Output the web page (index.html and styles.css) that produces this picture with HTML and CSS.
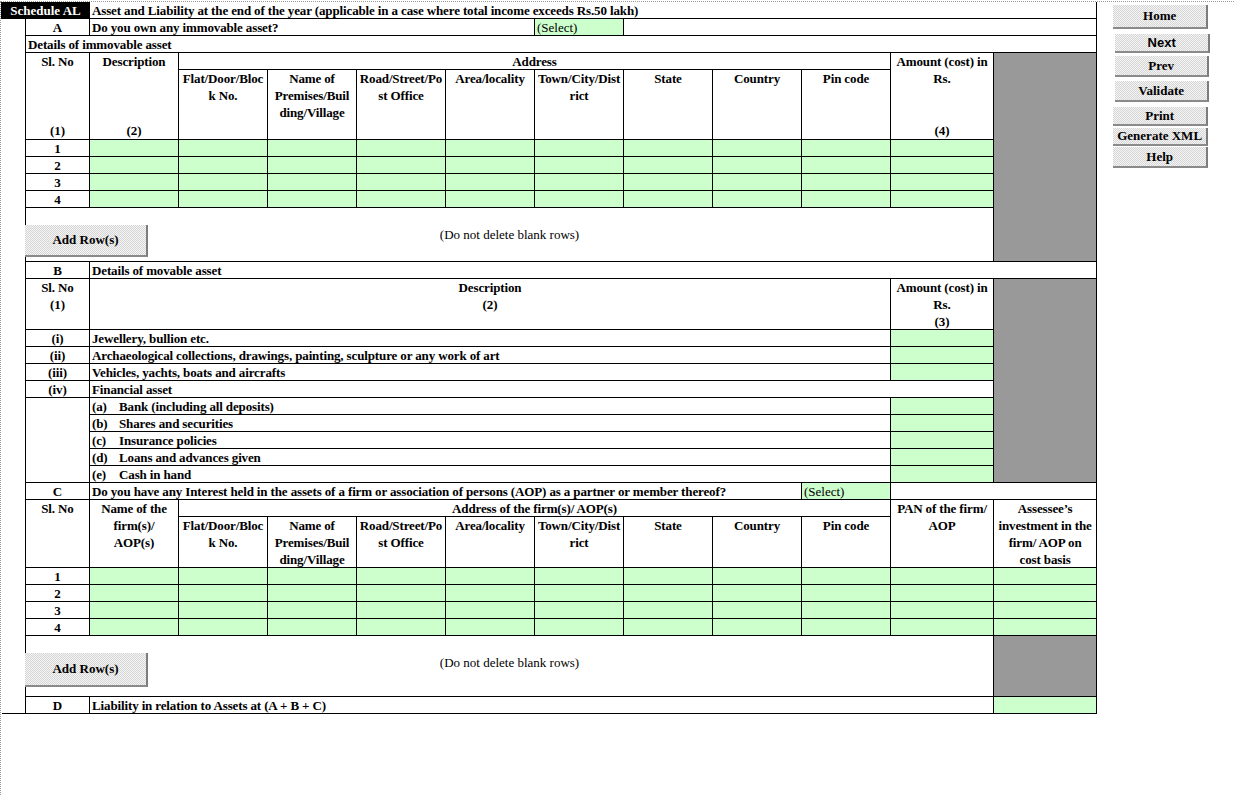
FILE: index.html
```html
<!DOCTYPE html>
<html>
<head>
<meta charset="utf-8">
<title>Schedule AL</title>
<link rel="stylesheet" href="styles.css">
</head>
<body>
<div class="page">
  <table class="sheet">
    <colgroup>
      <col class="w0"><col class="w1">
      <col class="w2"><col class="w2"><col class="w2"><col class="w2"><col class="w2"><col class="w2"><col class="w2"><col class="w2"><col class="w2">
      <col class="w3"><col class="w3">
    </colgroup>
    <tr class="h16">
      <td class="blk" colspan="2">Schedule AL</td>
      <td class="title" colspan="11">Asset and Liability at the end of the year (applicable in a case where total income exceeds Rs.50 lakh)</td>
    </tr>
    <tr class="h17">
      <td class="m"></td><td class="c">A</td>
      <td colspan="5">Do you own any immovable asset?</td>
      <td class="g n">(Select)</td>
      <td colspan="5"></td>
    </tr>
    <tr class="h17">
      <td class="m"></td><td colspan="12">Details of immovable asset</td>
    </tr>
    <tr class="h17">
      <td class="m"></td>
      <td class="hd" rowspan="2"><div class="tb"><span>Sl. No</span><span>(1)</span></div></td>
      <td class="hd" rowspan="2"><div class="tb"><span>Description</span><span>(2)</span></div></td>
      <td class="c" colspan="8">Address</td>
      <td class="hd" rowspan="2"><div class="tb"><span>Amount (cost) in<br>Rs.</span><span>(4)</span></div></td>
      <td class="x" rowspan="7"></td>
    </tr>
    <tr class="h70">
      <td class="m"></td>
      <td class="hd"><div class="t">Flat/Door/Bloc<br>k No.</div></td>
      <td class="hd"><div class="t">Name of<br>Premises/Buil<br>ding/Village</div></td>
      <td class="hd"><div class="t">Road/Street/Po<br>st Office</div></td>
      <td class="hd"><div class="t">Area/locality</div></td>
      <td class="hd"><div class="t">Town/City/Dist<br>rict</div></td>
      <td class="hd"><div class="t">State</div></td>
      <td class="hd"><div class="t">Country</div></td>
      <td class="hd"><div class="t">Pin code</div></td>
    </tr>
    <tr class="h17"><td class="m"></td><td class="c">1</td><td class="g"></td><td class="g"></td><td class="g"></td><td class="g"></td><td class="g"></td><td class="g"></td><td class="g"></td><td class="g"></td><td class="g"></td><td class="g"></td></tr>
    <tr class="h17"><td class="m"></td><td class="c">2</td><td class="g"></td><td class="g"></td><td class="g"></td><td class="g"></td><td class="g"></td><td class="g"></td><td class="g"></td><td class="g"></td><td class="g"></td><td class="g"></td></tr>
    <tr class="h17"><td class="m"></td><td class="c">3</td><td class="g"></td><td class="g"></td><td class="g"></td><td class="g"></td><td class="g"></td><td class="g"></td><td class="g"></td><td class="g"></td><td class="g"></td><td class="g"></td></tr>
    <tr class="h17"><td class="m"></td><td class="c">4</td><td class="g"></td><td class="g"></td><td class="g"></td><td class="g"></td><td class="g"></td><td class="g"></td><td class="g"></td><td class="g"></td><td class="g"></td><td class="g"></td></tr>
    <tr class="h54">
      <td class="m"></td>
      <td class="blank" colspan="11">
        <div class="bl">
          <button class="addrow">Add Row(s)</button>
          <span class="note">(Do not delete blank rows)</span>
        </div>
      </td>
    </tr>
    <tr class="h17">
      <td class="m"></td><td class="c">B</td><td colspan="11">Details of movable asset</td>
    </tr>
    <tr class="h51">
      <td class="m"></td>
      <td class="hd"><div class="t">Sl. No<br>(1)</div></td>
      <td class="hd" colspan="9"><div class="t">Description<br>(2)</div></td>
      <td class="hd"><div class="t">Amount (cost) in<br>Rs.<br>(3)</div></td>
      <td class="x" rowspan="10"></td>
    </tr>
    <tr class="h17"><td class="m"></td><td class="c">(i)</td><td colspan="9">Jewellery, bullion etc.</td><td class="g"></td></tr>
    <tr class="h17"><td class="m"></td><td class="c">(ii)</td><td colspan="9">Archaeological collections, drawings, painting, sculpture or any work of art</td><td class="g"></td></tr>
    <tr class="h17"><td class="m"></td><td class="c">(iii)</td><td colspan="9">Vehicles, yachts, boats and aircrafts</td><td class="g"></td></tr>
    <tr class="h17"><td class="m"></td><td class="c">(iv)</td><td colspan="10">Financial asset</td></tr>
    <tr class="h17"><td class="m"></td><td rowspan="5"></td><td colspan="9"><span class="lbl">(a)</span>Bank (including all deposits)</td><td class="g"></td></tr>
    <tr class="h17"><td class="m"></td><td colspan="9"><span class="lbl">(b)</span>Shares and securities</td><td class="g"></td></tr>
    <tr class="h17"><td class="m"></td><td colspan="9"><span class="lbl">(c)</span>Insurance policies</td><td class="g"></td></tr>
    <tr class="h17"><td class="m"></td><td colspan="9"><span class="lbl">(d)</span>Loans and advances given</td><td class="g"></td></tr>
    <tr class="h17"><td class="m"></td><td colspan="9"><span class="lbl">(e)</span>Cash in hand</td><td class="g"></td></tr>
    <tr class="h17">
      <td class="m"></td><td class="c">C</td>
      <td colspan="8">Do you have any Interest held in the assets of a firm or association of persons (AOP) as a partner or member thereof?</td>
      <td class="g n">(Select)</td>
      <td colspan="2"></td>
    </tr>
    <tr class="h17">
      <td class="m"></td>
      <td class="hd" rowspan="2"><div class="t">Sl. No</div></td>
      <td class="hd" rowspan="2"><div class="t">Name of the<br>firm(s)/<br>AOP(s)</div></td>
      <td class="c" colspan="8">Address of the firm(s)/ AOP(s)</td>
      <td class="hd" rowspan="2"><div class="t">PAN of the firm/<br>AOP</div></td>
      <td class="hd" rowspan="2"><div class="t">Assessee’s<br>investment in the<br>firm/ AOP on<br>cost basis</div></td>
    </tr>
    <tr class="h51">
      <td class="m"></td>
      <td class="hd"><div class="t">Flat/Door/Bloc<br>k No.</div></td>
      <td class="hd"><div class="t">Name of<br>Premises/Buil<br>ding/Village</div></td>
      <td class="hd"><div class="t">Road/Street/Po<br>st Office</div></td>
      <td class="hd"><div class="t">Area/locality</div></td>
      <td class="hd"><div class="t">Town/City/Dist<br>rict</div></td>
      <td class="hd"><div class="t">State</div></td>
      <td class="hd"><div class="t">Country</div></td>
      <td class="hd"><div class="t">Pin code</div></td>
    </tr>
    <tr class="h17"><td class="m"></td><td class="c">1</td><td class="g"></td><td class="g"></td><td class="g"></td><td class="g"></td><td class="g"></td><td class="g"></td><td class="g"></td><td class="g"></td><td class="g"></td><td class="g"></td><td class="g"></td></tr>
    <tr class="h17"><td class="m"></td><td class="c">2</td><td class="g"></td><td class="g"></td><td class="g"></td><td class="g"></td><td class="g"></td><td class="g"></td><td class="g"></td><td class="g"></td><td class="g"></td><td class="g"></td><td class="g"></td></tr>
    <tr class="h17"><td class="m"></td><td class="c">3</td><td class="g"></td><td class="g"></td><td class="g"></td><td class="g"></td><td class="g"></td><td class="g"></td><td class="g"></td><td class="g"></td><td class="g"></td><td class="g"></td><td class="g"></td></tr>
    <tr class="h17"><td class="m"></td><td class="c">4</td><td class="g"></td><td class="g"></td><td class="g"></td><td class="g"></td><td class="g"></td><td class="g"></td><td class="g"></td><td class="g"></td><td class="g"></td><td class="g"></td><td class="g"></td></tr>
    <tr class="h61">
      <td class="m"></td>
      <td class="blank" colspan="11">
        <div class="bl">
          <button class="addrow tall">Add Row(s)</button>
          <span class="note">(Do not delete blank rows)</span>
        </div>
      </td>
      <td class="x"></td>
    </tr>
    <tr class="h17">
      <td class="m bb"></td><td class="c">D</td>
      <td colspan="10">Liability in relation to Assets at (A + B + C)</td>
      <td class="g"></td>
    </tr>
  </table>

  <div class="side">
    <button class="btn b-home">Home</button>
    <button class="btn b-next">Next</button>
    <button class="btn b-prev">Prev</button>
    <button class="btn b-val">Validate</button>
    <button class="btn b-print">Print</button>
    <button class="btn b-xml">Generate XML</button>
    <button class="btn b-help">Help</button>
  </div>
</div>
</body>
</html>
```

FILE: styles.css
```css
* { box-sizing: border-box; }
html, body { margin: 0; padding: 0; background: #fff; overflow: hidden; }
body {
  font-family: "Liberation Serif", "Times New Roman", serif;
  font-size: 13px;
  color: #000;
}
.page {
  display: flex;
  align-items: flex-start;
  width: 1234px;
  height: 794px;
  margin-top: 1px;
  border-top: 1px dotted #9a9a9a;
  border-left: 1px dotted #9a9a9a;
}
.sheet {
  border-collapse: collapse;
  table-layout: fixed;
  width: 1095px;
  flex: none;
}
.w0 { width: 24px; }
.w1 { width: 64px; }
.w2 { width: 89px; }
.w3 { width: 103px; }
.h16 { height: 16px; }
.h17 { height: 17px; }
.h51 { height: 51px; }
.h54 { height: 54px; }
.h61 { height: 61px; }
.h70 { height: 70px; }

.sheet td {
  border: 1px solid #000;
  padding: 0 2px;
  font-weight: bold;
  letter-spacing: -0.13px;
  line-height: 15px;
  vertical-align: middle;
  white-space: nowrap;
}
.sheet td.m { border: none; }
.sheet td.bb { border-bottom: 1px solid #000; }
.sheet td.blk {
  background: #000;
  color: #fff;
  text-align: center;
  border-top: none;
  letter-spacing: 0;
}
.sheet td.title { border-top: none; padding-top: 1px; }
.c { text-align: center; }
.sheet td.n { font-weight: normal; letter-spacing: 0; }
.g { background: #ccffcc; }
.x {
  background: repeating-conic-gradient(#858585 0 25%, #adadad 0 50%) 0 0 / 2px 2px;
}
.sheet td.hd {
  vertical-align: top;
  text-align: center;
  line-height: 17px;
  padding: 0 1px;
}
.hd .t { margin-bottom: -3px; }
.hd .tb {
  height: 86px;
  display: flex;
  flex-direction: column;
  justify-content: space-between;
}
.lbl { display: inline-block; width: 27px; }

.sheet td.blank {
  padding: 0;
  vertical-align: top;
  letter-spacing: 0;
}
.bl {
  display: grid;
  grid-template-columns: 1fr auto 1fr;
  align-items: start;
}
.note {
  grid-column: 2;
  font-weight: normal;
  line-height: 17px;
  margin-top: 18px;
}
.addrow, .btn {
  font-family: "Liberation Serif", "Times New Roman", serif;
  font-weight: bold;
  font-size: 13px;
  color: #000;
  padding: 0;
  border: 0;
  border-right: 2px solid #7c7c7c;
  border-bottom: 2px solid #8a8a8a;
  background: repeating-conic-gradient(#f4f4f4 0 25%, #d6d6d6 0 50%) 0 0 / 2px 2px;
  display: flex;
  align-items: center;
  justify-content: center;
}
.addrow {
  grid-column: 1;
  grid-row: 1;
  justify-self: start;
  width: 123px;
  height: 32px;
  margin: 17px 0 0 -1px;
}
.addrow.tall { height: 34px; }

.side {
  display: flex;
  flex-direction: column;
  align-items: flex-start;
  margin-left: 16px;
  padding-top: 3px;
}
.btn { width: 95px; }
.b-home { height: 24px; }
.b-next { height: 19px; margin: 5px 0 0 2px; font-family: "Liberation Sans", Arial, sans-serif; }
.b-prev { height: 21px; width: 94px; margin: 3px 0 0 2px; }
.b-val { height: 21px; width: 94px; margin: 4px 0 0 2px; }
.b-print { height: 19px; margin-top: 5px; }
.b-xml { height: 18px; margin-top: 2px; }
.b-help { height: 21px; margin-top: 1px; }
```
